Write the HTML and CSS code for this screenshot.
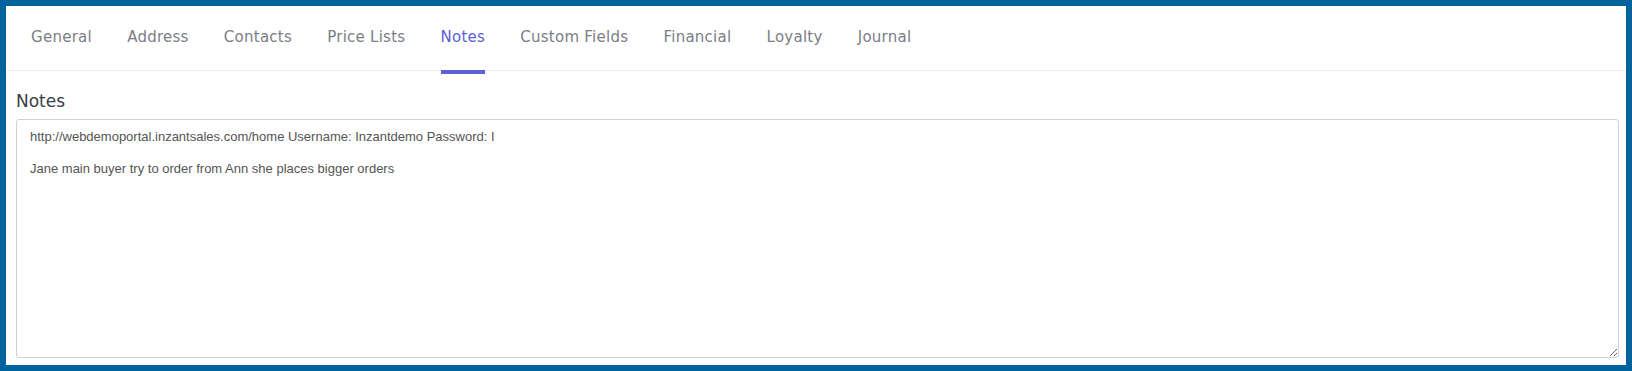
FILE: index.html
```html
<!DOCTYPE html>
<html lang="en">
<head>
    <meta charset="UTF-8">
    <meta name="viewport" content="width=device-width, initial-scale=1.0">
    <title>Customer Notes</title>
    <link rel="stylesheet" href="styles.css">
</head>
<body>
    <div class="frame">
        <nav class="tabs">
            <a class="tab">General</a>
            <a class="tab">Address</a>
            <a class="tab">Contacts</a>
            <a class="tab">Price Lists</a>
            <a class="tab active">Notes</a>
            <a class="tab">Custom Fields</a>
            <a class="tab">Financial</a>
            <a class="tab">Loyalty</a>
            <a class="tab">Journal</a>
        </nav>
        <div class="tab-content">
            <h3 class="section-title">Notes</h3>
            <textarea class="notes-box">http://webdemoportal.inzantsales.com/home Username: Inzantdemo Password: I

Jane main buyer try to order from Ann she places bigger orders</textarea>
        </div>
    </div>
</body>
</html>
```

FILE: styles.css
```css
* {
    box-sizing: border-box;
}

body {
    margin: 0;
    font-family: 'DejaVu Sans', sans-serif;
}

.frame {
    height: 371px;
    border: 6px solid #00639e;
    background-color: white;
    display: flex;
    flex-direction: column;
}

.tabs {
    display: flex;
    height: 65px;
    padding-left: 7.5px;
    border-bottom: 1px solid #ebebf1;
}

.tab {
    position: relative;
    padding: 20px 17.6px 0;
    font-size: 15px;
    line-height: 22px;
    letter-spacing: 0.25px;
    color: #7b7e86;
    cursor: pointer;
}

.tab.active {
    color: #5d60d8;
}

.tab.active::after {
    content: "";
    position: absolute;
    left: 17.6px;
    right: 17.6px;
    bottom: -4px;
    height: 4px;
    background-color: #5d60d8;
}

.tab-content {
    flex: 1;
    display: flex;
    flex-direction: column;
    padding: 18px 7px 7px 10px;
}

.section-title {
    margin: 0 0 6px;
    font-size: 17px;
    line-height: 24px;
    font-weight: normal;
    color: #3a3d44;
}

.notes-box {
    flex: 1;
    width: 100%;
    padding: 9px 13px 7px;
    font-family: 'Liberation Sans', Arial, sans-serif;
    font-size: 13px;
    line-height: 16px;
    color: #555;
    border: 1px solid #cfd1d7;
    border-radius: 3px;
}
```
